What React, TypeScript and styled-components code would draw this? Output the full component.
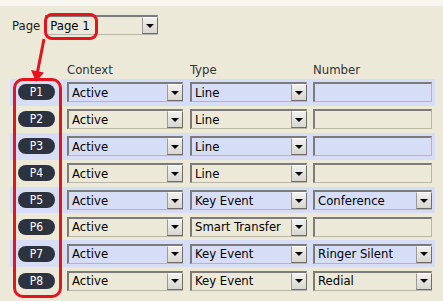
import React from "react";
import styled, { createGlobalStyle } from "styled-components";

const GlobalStyle = createGlobalStyle`
  html, body { margin: 0; padding: 0; background: #ECE9D8; }
  body {
    font-family: "DejaVu Sans Condensed", "DejaVu Sans", sans-serif;
    font-stretch: condensed;
    font-size: 13px;
    color: #000;
  }
`;

const Screen = styled.div`
  position: relative;
  width: 443px;
  height: 301px;
  overflow: hidden;
  background: #ECE9D8;
`;

const TopStrip = styled.div`
  height: 6px;
  background: #F6F5EF;
`;

const PageRow = styled.div`
  display: flex;
  align-items: center;
  gap: 5px;
  padding-left: 12px;
  margin-top: 9px;
  height: 20px;
`;

const Label = styled.span`
  color: #1a1a1a;
`;

const Field = styled.div<{ $w: number; $bg?: string }>`
  box-sizing: border-box;
  width: ${(p) => p.$w}px;
  height: 20px;
  display: flex;
  align-items: center;
  background: ${(p) => p.$bg || "transparent"};
  border-top: 2px solid #7b7b7b;
  border-left: 2px solid #7b7b7b;
  border-right: 1px solid #b9b6a8;
  border-bottom: 1px solid #b9b6a8;
`;

const FieldText = styled.span`
  flex: 1;
  padding-left: 3px;
  white-space: nowrap;
  overflow: hidden;
  line-height: 16px;
`;

const DropBtn = styled.span`
  box-sizing: border-box;
  width: 16px;
  height: 17px;
  display: flex;
  align-items: center;
  justify-content: center;
  background: linear-gradient(#f1f1ee, #d8d6cf);
  border-left: 1px solid #9a9a9a;
  border-top: 1px solid #ffffff;
  border-right: 1px solid #6d6d6d;
  border-bottom: 1px solid #6d6d6d;
  margin-right: -1px;
`;

const Tri = styled.span`
  width: 0;
  height: 0;
  border-left: 4px solid transparent;
  border-right: 4px solid transparent;
  border-top: 4px solid #000;
`;

const HeaderRow = styled.div`
  display: grid;
  grid-template-columns: 49px 123px 123px 119px;
  padding-left: 18px;
  margin-top: 25px;
  height: 19px;
  align-items: center;
  color: #333;
`;

const HeaderCell = styled.span``;

const Rows = styled.div`
  display: flex;
  flex-direction: column;
  margin-left: 10px;
  width: 425px;
`;

const Row = styled.div<{ $blue: boolean }>`
  display: grid;
  grid-template-columns: 49px 123px 123px 119px;
  padding-left: 8px;
  height: 26.9px;
  align-items: center;
  background: ${(p) => (p.$blue ? "#D6DDF5" : "#ECE9D8")};
`;

const Pill = styled.span`
  width: 37px;
  height: 16px;
  border-radius: 8px;
  background: #2C333E;
  color: #fff;
  font-size: 12px;
  display: flex;
  align-items: center;
  justify-content: center;
`;

const Highlight = styled.div<{ $x: number; $y: number; $w: number; $h: number; $r: number }>`
  position: absolute;
  left: ${(p) => p.$x}px;
  top: ${(p) => p.$y}px;
  width: ${(p) => p.$w}px;
  height: ${(p) => p.$h}px;
  box-sizing: border-box;
  border: 3px solid #E3141C;
  border-radius: ${(p) => p.$r}px;
  pointer-events: none;
`;

const Arrow = styled.svg`
  position: absolute;
  left: 0;
  top: 0;
  pointer-events: none;
`;

type RowData = { ctx: string; type: string; num: string | null };

const data: RowData[] = [
  { ctx: "Active", type: "Line", num: null },
  { ctx: "Active", type: "Line", num: null },
  { ctx: "Active", type: "Line", num: null },
  { ctx: "Active", type: "Line", num: null },
  { ctx: "Active", type: "Key Event", num: "Conference" },
  { ctx: "Active", type: "Smart Transfer", num: null },
  { ctx: "Active", type: "Key Event", num: "Ringer Silent" },
  { ctx: "Active", type: "Key Event", num: "Redial" },
];

const Select: React.FC<{ w: number; text: string; bg: string }> = ({ w, text, bg }) => (
  <Field $w={w} $bg={bg}>
    <FieldText>{text}</FieldText>
    <DropBtn>
      <Tri />
    </DropBtn>
  </Field>
);

export default function App() {
  return (
    <>
      <GlobalStyle />
      <Screen>
        <TopStrip />
        <PageRow>
          <Label>Page</Label>
          <Select w={113} text="Page 1" bg="#ECE9D8" />
        </PageRow>
        <HeaderRow>
          <HeaderCell />
          <HeaderCell>Context</HeaderCell>
          <HeaderCell>Type</HeaderCell>
          <HeaderCell>Number</HeaderCell>
        </HeaderRow>
        <Rows>
          {data.map((r, i) => {
            const blue = i % 2 === 0;
            const bg = blue ? "#D6DDF7" : "#ECE9D8";
            return (
              <Row key={i} $blue={blue}>
                <Pill>P{i + 1}</Pill>
                <Select w={116} text={r.ctx} bg={bg} />
                <Select w={117} text={r.type} bg={bg} />
                {r.num ? (
                  <Select w={119} text={r.num} bg={bg} />
                ) : (
                  <Field $w={119} $bg={bg} />
                )}
              </Row>
            );
          })}
        </Rows>
        <Highlight $x={44} $y={13} $w={54} $h={27} $r={8} />
        <Highlight $x={13} $y={78} $w={49} $h={220} $r={10} />
        <Arrow width="443" height="301" viewBox="0 0 443 301">
          <line x1="44" y1="39" x2="37.5" y2="72" stroke="#E3141C" strokeWidth="3" />
          <polygon points="31,70 44,72.5 36,82" fill="#E3141C" />
        </Arrow>
      </Screen>
    </>
  );
}
